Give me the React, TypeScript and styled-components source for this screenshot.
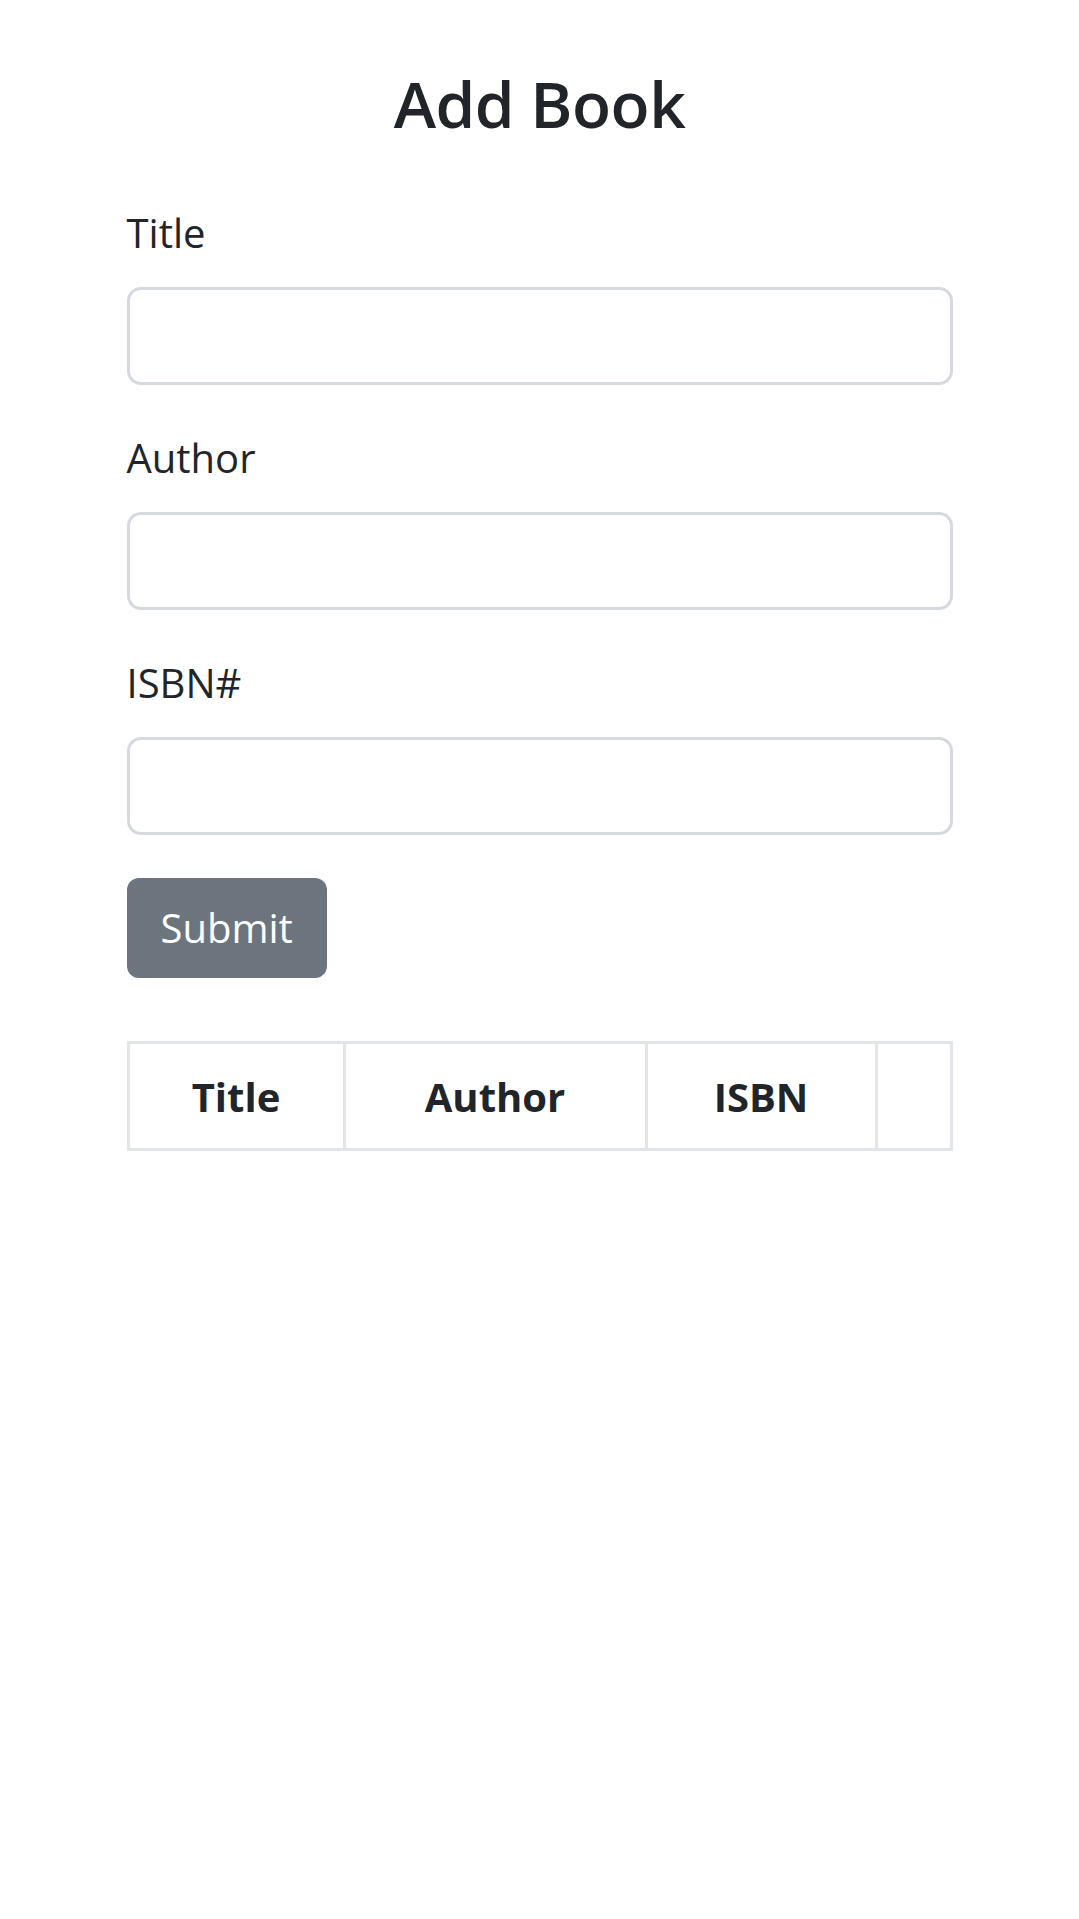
import React from "react";
import styled, { createGlobalStyle } from "styled-components";

const GlobalStyle = createGlobalStyle`
  html, body {
    margin: 0;
    padding: 0;
    background: #ffffff;
  }
  body {
    font-family: "Open Sans", "Noto Sans", "Liberation Sans", sans-serif;
    color: #212529;
  }
  * { box-sizing: border-box; }
`;

const Page = styled.main`
  width: 826px;
  margin: 0 auto;
  padding-top: 65px;
  padding-bottom: 40px;
`;

const Heading = styled.h1`
  margin: 0 0 60px;
  font-size: 64px;
  font-weight: 600;
  letter-spacing: -0.5px;
  line-height: 78px;
  text-align: center;
  color: #212529;
`;

const Form = styled.form`
  display: flex;
  flex-direction: column;
`;

const Field = styled.div`
  display: flex;
  flex-direction: column;
  margin-bottom: 43.5px;
`;

const Label = styled.label`
  display: block;
  font-size: 40px;
  line-height: 60px;
  font-weight: 400;
  margin-bottom: 23.5px;
  color: #212529;
`;

const Input = styled.input`
  display: block;
  width: 100%;
  height: 98px;
  border: 3px solid #d6dadf;
  border-radius: 14px;
  background: #ffffff;
  font-family: inherit;
  font-size: 40px;
  padding: 0 30px;
  outline: none;
`;

const Button = styled.button`
  align-self: flex-start;
  height: 100px;
  padding: 0 34px;
  margin-top: 0;
  border: none;
  border-radius: 12px;
  background: #6c757d;
  color: #ffffff;
  font-family: inherit;
  font-size: 40px;
  line-height: 100px;
  cursor: pointer;
`;

const Table = styled.table`
  width: 100%;
  margin-top: 63px;
  border-collapse: separate;
  border-spacing: 0;
  table-layout: fixed;
  border-top: 3px solid #e2e5e9;
  border-left: 3px solid #e2e5e9;
`;

const HeadCell = styled.th<{ $w: number }>`
  width: ${(p) => p.$w}px;
  border-right: 3px solid #e2e5e9;
  border-bottom: 3px solid #e2e5e9;
  padding: 21.5px 0;
  font-size: 40px;
  line-height: 61px;
  font-weight: 700;
  text-align: center;
  color: #212529;
`;

const columns = [
  { label: "Title", w: 216 },
  { label: "Author", w: 302 },
  { label: "ISBN", w: 230 },
  { label: "", w: 75 },
];

export default function App() {
  return (
    <>
      <GlobalStyle />
      <Page>
        <Heading>Add Book</Heading>
        <Form onSubmit={(e) => e.preventDefault()}>
          <Field>
            <Label htmlFor="title">Title</Label>
            <Input id="title" type="text" />
          </Field>
          <Field>
            <Label htmlFor="author">Author</Label>
            <Input id="author" type="text" />
          </Field>
          <Field>
            <Label htmlFor="isbn">ISBN#</Label>
            <Input id="isbn" type="text" />
          </Field>
          <Button type="submit">Submit</Button>
        </Form>
        <Table>
          <thead>
            <tr>
              {columns.map((c, i) => (
                <HeadCell key={i} $w={c.w}>
                  {c.label}
                </HeadCell>
              ))}
            </tr>
          </thead>
          <tbody />
        </Table>
      </Page>
    </>
  );
}
